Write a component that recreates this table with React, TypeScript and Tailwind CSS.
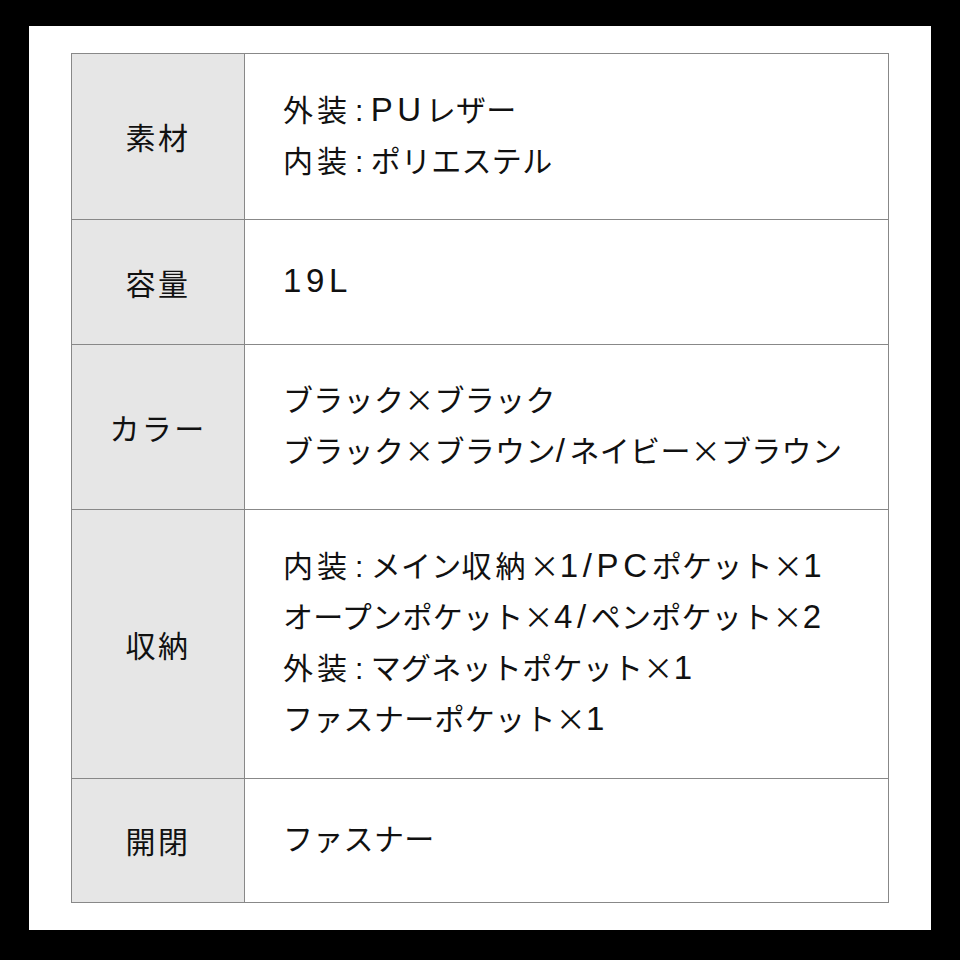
import React from "react";

const rows: { label: string; lines: string[]; h: string }[] = [
  { label: "素材", lines: ["外装：PUレザー", "内装：ポリエステル"], h: "h-[165px]" },
  { label: "容量", lines: ["19L"], h: "h-[125px]" },
  {
    label: "カラー",
    lines: ["ブラック×ブラック", "ブラック×ブラウン/ネイビー×ブラウン"],
    h: "h-[165px]",
  },
  {
    label: "収納",
    lines: [
      "内装：メイン収納×1/PCポケット×1",
      "オープンポケット×4/ペンポケット×2",
      "外装：マグネットポケット×1",
      "ファスナーポケット×1",
    ],
    h: "h-[269px]",
  },
  { label: "開閉", lines: ["ファスナー"], h: "h-[124px]" },
];

const latinFont = { fontFamily: '"Liberation Sans", Arial, sans-serif' };

// latin runs and the colon use an Arial-metric face; the rest stays in Noto CJK
const Line: React.FC<{ text: string }> = ({ text }) => {
  const parts = text.split(/([\x20-\x7E]+|：|[\u4E00-\u9FFF]+)/).filter(Boolean);
  return (
    <div className="whitespace-nowrap h-[51px] leading-[51px]">
      {parts.map((p, i) => {
        if (p === "：")
          return (
            <span key={i} className="leading-none ml-[4px] mr-[7px]" style={latinFont}>
              :
            </span>
          );
        if (/^[\x20-\x7E]+$/.test(p))
          return (
            <span key={i} className="text-[33px] leading-none tracking-[0.14em]" style={latinFont}>
              {p}
            </span>
          );
        if (/^[\u4E00-\u9FFF]+$/.test(p))
          return (
            <span key={i} className="tracking-[4px]">
              {p}
            </span>
          );
        return <span key={i}>{p}</span>;
      })}
    </div>
  );
};

const App: React.FC = () => {
  return (
    <div
      className="w-[960px] h-[960px] bg-black pl-[29px] pr-[29px] pt-[26px] pb-[30px]"
      style={{ fontFamily: '"Noto Sans CJK JP", "Noto Sans", sans-serif' }}
    >
      <div className="w-full h-full bg-white pl-[42px] pr-[42px] pt-[27px] pb-[28px]">
        <div className="border-[1.5px] border-[#888] flex flex-col text-[#111]">
          {rows.map((row, i) => (
            <div
              key={row.label}
              className={`flex ${row.h} ${i > 0 ? "border-t-[1.5px] border-[#888]" : ""}`}
            >
              <div className="w-[173px] shrink-0 bg-[#e6e6e6] border-r-[1.5px] border-[#888] flex items-center justify-center text-[30px] tracking-[0.08em]">
                {row.label}
              </div>
              <div className="flex-1 flex flex-col justify-center pl-[38px] pb-[6px] text-[30px] tracking-[0.01em]">
                {row.lines.map((l) => (
                  <Line key={l} text={l} />
                ))}
              </div>
            </div>
          ))}
        </div>
      </div>
    </div>
  );
};

export default App;
